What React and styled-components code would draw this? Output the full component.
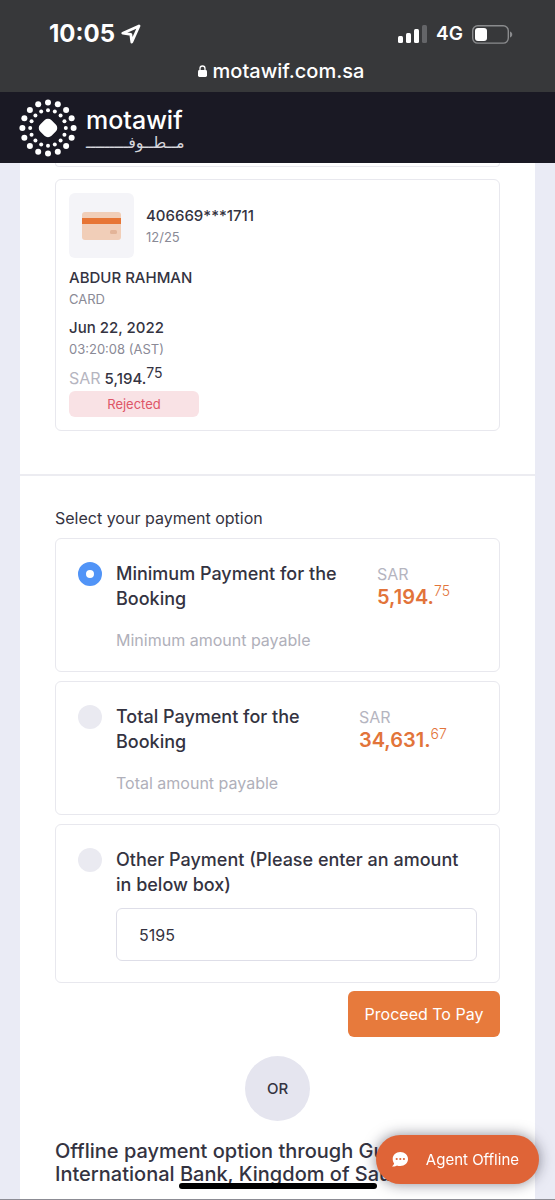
import React, { useState } from "react";
import styled, { createGlobalStyle } from "styled-components";

const Global = createGlobalStyle`
  *, *::before, *::after { box-sizing: border-box; }
  body { margin: 0; background: #eaebf5; color: #343341; font-family: Inter, "Open Sans", sans-serif; }
  h2, p { margin: 0; }
  button, input { font-family: inherit; }
`;

const Page = styled.div`
  min-height: 100vh;
  display: flex;
  flex-direction: column;
`;

const BrowserBar = styled.div`
  height: 92px;
  padding: 20px 42px 0 49px;
  background: #37383a;
  color: #fff;
`;

const StatusRow = styled.div`
  display: flex;
  align-items: center;
  justify-content: space-between;
  height: 28px;
`;

const Clock = styled.div`
  display: flex;
  align-items: center;
  gap: 6px;
  font-size: 24px;
  font-weight: 700;
  line-height: 28px;
`;

const Signals = styled.div`
  display: flex;
  align-items: center;
  gap: 9px;
  font-size: 19px;
  font-weight: 600;
  line-height: 28px;
`;

const Address = styled.div`
  display: flex;
  align-items: center;
  justify-content: center;
  gap: 6px;
  height: 28px;
  margin-top: 9px;
  font-size: 20px;
  font-weight: 500;
`;

const SiteHeader = styled.header`
  height: 71px;
  padding: 0 20px;
  display: flex;
  align-items: center;
  background: #1a1924;
  color: #fff;
`;

const Brand = styled.a`
  display: flex;
  align-items: center;
  gap: 10px;
  color: inherit;
  text-decoration: none;
`;

const BrandWords = styled.span`
  display: flex;
  flex-direction: column;
  padding-top: 2px;
`;

const BrandLatin = styled.span`
  font-size: 25px;
  font-weight: 500;
  line-height: 28px;
`;

const BrandArabic = styled.span`
  font-family: "DejaVu Sans", sans-serif;
  font-size: 16px;
  line-height: 18px;
  white-space: nowrap;
  color: #d6d6dc;
`;

const Sheet = styled.main`
  flex: 1;
  margin: 0 20px;
  background: #fff;
`;

const History = styled.section`
  padding: 0 35px 43px;
  border-bottom: 2px solid #ececf1;
`;

const Card = styled.article`
  border: 1px solid #e8e8ee;
  border-radius: 6px;
  padding: 13px;
`;

const PreviousCard = styled(Card)`
  height: 4px;
  padding: 0;
  border-top: 0;
  border-radius: 0 0 6px 6px;
  margin-bottom: 12px;
`;

const CardTop = styled.div`
  display: flex;
  align-items: center;
  gap: 12px;
  margin-bottom: 8px;
`;

const CardThumb = styled.div`
  width: 65px;
  height: 65px;
  border-radius: 6px;
  background: #f4f4f8;
  display: grid;
  place-items: center;
`;

const Fact = styled.div`
  margin-bottom: 6px;
`;

const Strong = styled.p`
  font-size: 15px;
  font-weight: 500;
  line-height: 23px;
`;

const Muted = styled.p`
  font-size: 13px;
  line-height: 21px;
  color: #8a8a96;
`;

const Total = styled.p`
  height: 25px;
  font-size: 15px;
  font-weight: 500;
  line-height: 25px;
`;

const Currency = styled.span`
  color: #b5b5bf;
  font-size: 16px;
  font-weight: 400;
  margin-right: 4px;
`;

const Cents = styled.sup`
  font-size: 14px;
  font-weight: ${(p) => (p.$light ? 300 : 400)};
  line-height: 0;
`;

const Rejected = styled.p`
  width: 130px;
  line-height: 26px;
  border-radius: 6px;
  background: #f9e2e5;
  color: #de5567;
  font-size: 13px;
  text-align: center;
`;

const Payment = styled.form`
  padding: 29px 35px 0;
`;

const Options = styled.fieldset`
  border: 0;
  margin: 0 0 8px;
  padding: 0;
  min-width: 0;
  display: flex;
  flex-direction: column;
  gap: 9px;
`;

const Legend = styled.legend`
  padding: 0;
  margin-bottom: 7px;
  font-size: 16px;
  line-height: 26px;
`;

const Option = styled.div`
  display: flex;
  align-items: flex-start;
  gap: 14px;
  padding: 22px 22px 21px;
  border: 1px solid #e8e8ee;
  border-radius: 6px;
`;

const Radio = styled.input`
  appearance: none;
  flex: none;
  width: 24px;
  height: 24px;
  margin: 1px 0 0;
  border-radius: 50%;
  background: #eaeaf1;
  &:checked { background: #fff; border: 8px solid #5194f7; }
`;

const OptionBody = styled.div`
  flex: 1;
  min-width: 0;
`;

const OptionTitle = styled.label`
  display: block;
  padding-right: 8px;
  font-size: 18px;
  font-weight: 500;
  line-height: 25px;
`;

const OptionNote = styled.p`
  margin-top: 19px;
  font-size: 16px;
  line-height: 20px;
  color: #b0b0ba;
`;

const Amount = styled.div`
  flex: none;
  width: ${(p) => p.$width}px;
  padding-top: 2px;
  color: #e2743a;
  font-size: 20px;
  font-weight: 600;
  line-height: 23px;
  white-space: nowrap;
`;

const AmountCurrency = styled(Currency)`
  display: block;
`;

const AmountBox = styled.input`
  display: block;
  width: 100%;
  height: 53px;
  margin-top: 11px;
  padding: 0 22px;
  border: 1px solid #dedee8;
  border-radius: 6px;
  background: #fff;
  color: #343341;
  font-size: 16px;
`;

const PayButton = styled.button`
  display: block;
  width: 152px;
  height: 46px;
  margin-left: auto;
  padding: 0;
  border: 0;
  border-radius: 6px;
  background: #e77a3c;
  color: #fff;
  font-size: 16px;
`;

const Or = styled.div`
  width: 65px;
  height: 65px;
  margin: 19px auto;
  border-radius: 50%;
  display: grid;
  place-items: center;
  background: #e5e5ef;
  font-size: 15px;
  font-weight: 500;
`;

const OfflineTitle = styled.h2`
  padding: 0 35px 14px;
  font-size: 20px;
  font-weight: 500;
  line-height: 23px;
`;

const AgentButton = styled.button`
  position: fixed;
  right: 16px;
  bottom: 16px;
  width: 163px;
  height: 49px;
  padding: 0 20px 0 16px;
  border: 0;
  border-radius: 25px;
  display: flex;
  align-items: center;
  justify-content: space-between;
  background: #df6437;
  color: #fff;
  font-size: 15px;
  box-shadow: 0 0 14px rgba(20, 20, 40, 0.5);
`;

const HomeIndicator = styled.div`
  position: fixed;
  bottom: 11px;
  left: 50%;
  width: 198px;
  height: 6px;
  border-radius: 3px;
  background: #000;
  transform: translateX(-50%);
`;

const BottomEdge = styled.div`
  position: fixed;
  inset: auto 0 0;
  height: 1px;
  background: #8c8c94;
`;

const ring = (radius, r) =>
  Array.from({ length: 16 }, (_, i) => {
    const a = (i * Math.PI) / 8;
    return <circle key={`${radius}-${i}`} cx={28 + radius * Math.cos(a)} cy={28 + radius * Math.sin(a)} r={r} />;
  });

const LogoMark = () => (
  <svg width="56" height="56" viewBox="0 0 56 56" fill="#fff" overflow="visible" aria-hidden="true">
    {ring(25.6, 3)}
    {ring(17.8, 2)}
    <rect x="20" y="20" width="16" height="16" rx="5" transform="rotate(45 28 28)" />
  </svg>
);

const LocationIcon = () => (
  <svg width="20" height="20" viewBox="0 0 20 20" fill="none" stroke="#fff" strokeWidth="2.8" strokeLinejoin="round" aria-hidden="true">
    <path d="M18 2 1.8 9.2 9.8 10.3 10.8 18Z" />
  </svg>
);

const SignalIcon = () => (
  <svg width="29" height="18" viewBox="0 0 29 18" fill="#fff" aria-hidden="true">
    <rect y="11" width="5" height="7" rx="1.5" />
    <rect x="8" y="8" width="5" height="10" rx="1.5" />
    <rect x="16" y="4" width="5" height="14" rx="1.5" />
    <rect x="24" width="5" height="18" rx="1.5" fill="#646568" />
  </svg>
);

const BatteryIcon = () => (
  <svg width="41" height="19" viewBox="0 0 41 19" fill="none" aria-hidden="true">
    <rect x=".7" y=".7" width="35.6" height="17.4" rx="5" stroke="#8a8b8d" strokeWidth="1.4" />
    <rect x="3" y="3" width="12" height="13" rx="3" fill="#fff" />
    <path d="M38 6.5c3 1 3 5 0 6Z" fill="#8a8b8d" />
  </svg>
);

const LockIcon = () => (
  <svg width="9" height="12" viewBox="0 0 9 12" aria-hidden="true">
    <rect y="5" width="9" height="7" rx="1.4" fill="#fff" />
    <path d="M2 6V3.5a2.5 2.5 0 0 1 5 0V6" fill="none" stroke="#fff" strokeWidth="1.3" />
  </svg>
);

const CreditCardIcon = () => (
  <svg width="39" height="28" viewBox="0 0 39 28" aria-hidden="true">
    <rect width="39" height="28" rx="3" fill="#f1ceb8" />
    <rect y="6" width="39" height="6" fill="#e77535" />
    <rect x="28" y="18" width="7" height="4" rx="1.5" fill="#e3b498" />
  </svg>
);

const ChatIcon = () => (
  <svg width="16" height="15" viewBox="0 0 16 15" aria-hidden="true">
    <path d="M8.300 0C3.900 0 .7 3 .7 7c0 1.700.5 3.200 1.400 4.300C1.900 12.600 1.100 13.600 0 14.400c1.900.3 3.700-.2 4.900-1 1 .4 2.100.6 3.400.6 4.400 0 7.700-3 7.700-7s-3.300-7-7.700-7Z" fill="#fff" />
    <circle cx="4.700" cy="7" r="1.100" fill="#df6437" />
    <circle cx="8.300" cy="7" r="1.100" fill="#df6437" />
    <circle cx="11.900" cy="7" r="1.100" fill="#df6437" />
  </svg>
);

export default function App() {
  const [choice, setChoice] = useState("minimum");
  const [amount, setAmount] = useState("5195");
  const radio = (id) => ({
    type: "radio",
    name: "payment",
    id,
    checked: choice === id,
    onChange: () => setChoice(id),
  });

  return (
    <Page>
      <Global />
      <BrowserBar>
        <StatusRow>
          <Clock>10:05 <LocationIcon /></Clock>
          <Signals><SignalIcon />4G<BatteryIcon /></Signals>
        </StatusRow>
        <Address><LockIcon />motawif.com.sa</Address>
      </BrowserBar>
      <SiteHeader>
        <Brand href="#">
          <LogoMark />
          <BrandWords>
            <BrandLatin>motawif</BrandLatin>
            <BrandArabic lang="ar" dir="rtl">مــطــوفـــــــــ</BrandArabic>
          </BrandWords>
        </Brand>
      </SiteHeader>
      <Sheet>
        <History>
          <PreviousCard />
          <Card>
            <CardTop>
              <CardThumb><CreditCardIcon /></CardThumb>
              <div>
                <Strong>406669***1711</Strong>
                <Muted>12/25</Muted>
              </div>
            </CardTop>
            <Fact>
              <Strong>ABDUR RAHMAN</Strong>
              <Muted>CARD</Muted>
            </Fact>
            <Fact>
              <Strong>Jun 22, 2022</Strong>
              <Muted>03:20:08 (AST)</Muted>
            </Fact>
            <Total><Currency>SAR</Currency>5,194.<Cents>75</Cents></Total>
            <Rejected>Rejected</Rejected>
          </Card>
        </History>
        <Payment onSubmit={(e) => e.preventDefault()}>
          <Options>
            <Legend>Select your payment option</Legend>
            <Option>
              <Radio {...radio("minimum")} />
              <OptionBody>
                <OptionTitle htmlFor="minimum">Minimum Payment for the Booking</OptionTitle>
                <OptionNote>Minimum amount payable</OptionNote>
              </OptionBody>
              <Amount $width={100}><AmountCurrency>SAR</AmountCurrency>5,194.<Cents $light>75</Cents></Amount>
            </Option>
            <Option>
              <Radio {...radio("total")} />
              <OptionBody>
                <OptionTitle htmlFor="total">Total Payment for the Booking</OptionTitle>
                <OptionNote>Total amount payable</OptionNote>
              </OptionBody>
              <Amount $width={118}><AmountCurrency>SAR</AmountCurrency>34,631.<Cents $light>67</Cents></Amount>
            </Option>
            <Option>
              <Radio {...radio("other")} />
              <OptionBody>
                <OptionTitle htmlFor="other">Other Payment (Please enter an amount in below box)</OptionTitle>
                <AmountBox aria-label="Other payment amount" inputMode="numeric" value={amount} onChange={(e) => setAmount(e.target.value)} />
              </OptionBody>
            </Option>
          </Options>
          <PayButton type="submit">Proceed To Pay</PayButton>
        </Payment>
        <Or>OR</Or>
        <OfflineTitle>Offline payment option through Gulf International Bank, Kingdom of Saudi</OfflineTitle>
      </Sheet>
      <AgentButton type="button"><ChatIcon />Agent Offline</AgentButton>
      <HomeIndicator />
      <BottomEdge />
    </Page>
  );
}
